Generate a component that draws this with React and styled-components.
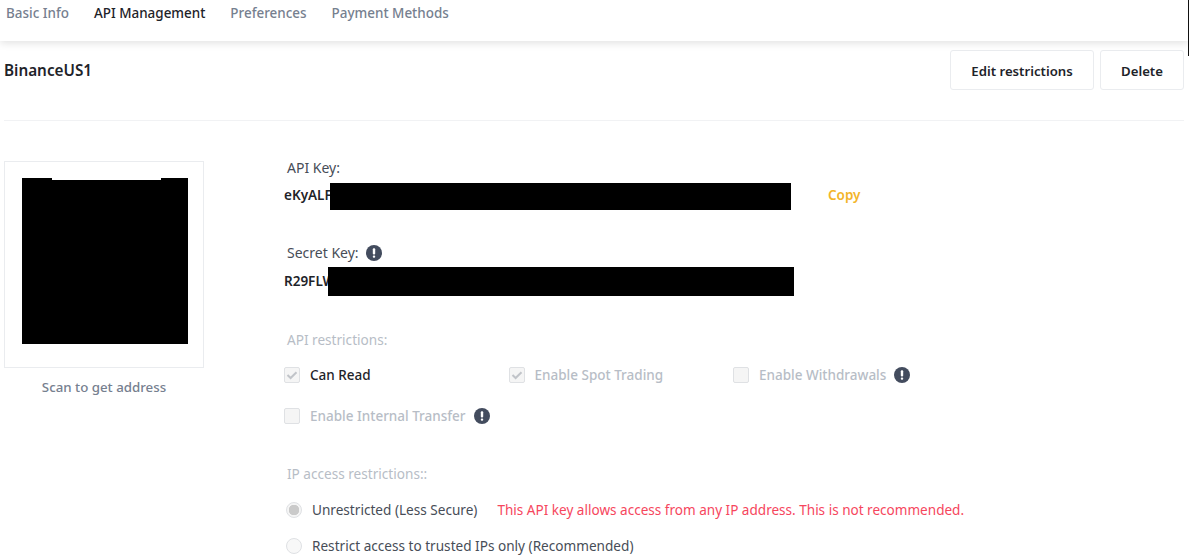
import React from "react";
import styled, { createGlobalStyle } from "styled-components";

const GlobalStyle = createGlobalStyle`
  html, body {
    margin: 0;
    height: 555px;
    overflow: hidden;
    background: #fff;
    font-family: "Noto Sans", "Open Sans", sans-serif;
  }
`;

const tabs = ["Basic Info", "API Management", "Preferences", "Payment Methods"];

const Alert = () => (
  <AlertIcon width="16" height="16" viewBox="0 0 16 16">
    <circle cx="8" cy="8" r="8" fill="#434c5e" />
    <rect x="6.8" y="3.2" width="2.4" height="6.4" rx="1" fill="#fff" />
    <rect x="6.8" y="10.6" width="2.4" height="2.2" rx="1" fill="#fff" />
  </AlertIcon>
);

const Check = ({ checked, label, dark, alert }) => (
  <CheckItem>
    <CheckBox>
      {checked && (
        <svg width="12" height="12" viewBox="0 0 12 12">
          <path d="M1.5 6 4.6 9 10.5 3.2" fill="none" stroke="#c1c4c9" strokeWidth="2" />
        </svg>
      )}
    </CheckBox>
    <CheckLabel $dark={dark}>{label}</CheckLabel>
    {alert && <Alert />}
  </CheckItem>
);

const App = () => {
  return (
    <>
      <GlobalStyle />
      <EdgeLine />
      <Tabs>
        {tabs.map((t, i) => (
          <Tab key={t} $active={i === 1}>{t}</Tab>
        ))}
      </Tabs>
      <Page>
        <TitleRow>
          <Title>BinanceUS1</Title>
          <Buttons>
            <OutlineButton $w={144}>Edit restrictions</OutlineButton>
            <OutlineButton $w={84}>Delete</OutlineButton>
          </Buttons>
        </TitleRow>
        <Content>
          <QrColumn>
            <QrBox>
              <QrNotch />
              <QrBlack />
            </QrBox>
            <ScanText>Scan to get address</ScanText>
          </QrColumn>
          <Details>
            <Label>API Key:</Label>
            <KeyRow>
              <KeyText $w={46} $lift>eKyALF</KeyText>
              <Redaction $w={461} $h={27} />
              <CopyLink>Copy</CopyLink>
            </KeyRow>
            <SecretLabel>
              Secret Key:
              <Alert />
            </SecretLabel>
            <KeyRow $tight>
              <KeyText $w={44}>R29FLW</KeyText>
              <Redaction $w={466} $h={29} />
            </KeyRow>
            <MutedLabel>API restrictions:</MutedLabel>
            <CheckGrid>
              <Check checked dark label="Can Read" />
              <Check checked label="Enable Spot Trading" />
              <Check label="Enable Withdrawals" alert />
              <Check label="Enable Internal Transfer" alert />
            </CheckGrid>
            <IpLabel>IP access restrictions::</IpLabel>
            <RadioRow>
              <Radio $on />
              <RadioLabel>Unrestricted (Less Secure)</RadioLabel>
              <Warning>This API key allows access from any IP address. This is not recommended.</Warning>
            </RadioRow>
            <RadioRow>
              <Radio />
              <RadioLabel>Restrict access to trusted IPs only (Recommended)</RadioLabel>
            </RadioRow>
          </Details>
        </Content>
      </Page>
    </>
  );
};

export default App;

const EdgeLine = styled.div`
  position: absolute;
  top: 0;
  right: 0;
  width: 1px;
  height: 56px;
  background: #111;
  z-index: 2;
`;

const Tabs = styled.div`
  height: 41px;
  display: flex;
  gap: 25px;
  padding: 0 0 0 6px;
  box-shadow: 0 2px 8px rgba(0, 0, 0, 0.12);
  position: relative;
`;

const Tab = styled.div`
  font-size: 13.45px;
  line-height: 26px;
  font-weight: 500;
  color: ${(p) => (p.$active ? "#1e2329" : "#76808f")};
`;

const Page = styled.div`
  padding: 0 5px 0 4px;
`;

const TitleRow = styled.div`
  height: 80px;
  padding-top: 9px;
  box-sizing: border-box;
  display: flex;
  justify-content: space-between;
  border-bottom: 1px solid #f1f2f4;
`;

const Title = styled.div`
  font-size: 15.3px;
  font-weight: 600;
  line-height: 40px;
  color: #1e2329;
`;

const Buttons = styled.div`
  display: flex;
  gap: 6px;
`;

const OutlineButton = styled.button`
  width: ${(p) => p.$w}px;
  height: 40px;
  background: #fff;
  border: 1px solid #eaecef;
  border-radius: 3px;
  font: 600 13.2px "Noto Sans", sans-serif;
  color: #1e2329;
  padding: 1px 0 0;
`;

const Content = styled.div`
  display: flex;
  padding-top: 40px;
`;

const QrColumn = styled.div`
  width: 200px;
  margin-right: 80px;
`;

const QrBox = styled.div`
  width: 200px;
  height: 207px;
  box-sizing: border-box;
  border: 1px solid #eaecef;
  padding: 16px 15px 0 17px;
  position: relative;
`;

const QrBlack = styled.div`
  width: 166px;
  height: 166px;
  background: #000;
`;

const QrNotch = styled.div`
  position: absolute;
  top: 16px;
  left: 47px;
  width: 109px;
  height: 2px;
  background: #fff;
`;

const ScanText = styled.div`
  margin-top: 9px;
  text-align: center;
  font-size: 13.3px;
  line-height: 20px;
  font-weight: 500;
  color: #76808f;
`;

const Details = styled.div`
  flex: 1;
  display: flex;
  flex-direction: column;
`;

const Label = styled.div`
  font-size: 14px;
  line-height: 16px;
  color: #474d57;
  padding-left: 3px;
  margin-top: -1px;
`;

const SecretLabel = styled(Label)`
  display: flex;
  align-items: center;
  gap: 7px;
  margin-top: 35px;
`;

const KeyRow = styled.div`
  display: flex;
  align-items: center;
  margin-top: ${(p) => (p.$tight ? "6px" : "7px")};
`;

const KeyText = styled.div`
  width: ${(p) => p.$w}px;
  white-space: nowrap;
  font-size: 13.5px;
  font-weight: 600;
  color: #1e2329;
  padding-bottom: ${(p) => (p.$lift ? "3px" : "1px")};
`;

const Redaction = styled.div`
  position: relative;
  width: ${(p) => p.$w}px;
  height: ${(p) => p.$h}px;
  background: #000;
`;

const CopyLink = styled.div`
  margin-left: 37px;
  padding-bottom: 3px;
  font-size: 13.5px;
  font-weight: 600;
  color: #f3b52a;
`;

const MutedLabel = styled.div`
  margin-top: 35px;
  padding-left: 3px;
  font-size: 13.6px;
  line-height: 18px;
  color: #b7bdc6;
`;

const IpLabel = styled(MutedLabel)`
  margin-top: 39px;
  margin-bottom: 1px;
`;

const CheckGrid = styled.div`
  display: grid;
  grid-template-columns: repeat(3, 224.5px);
  row-gap: 21px;
  margin-top: 16px;
`;

const CheckItem = styled.div`
  display: flex;
  align-items: center;
  height: 20px;
`;

const CheckBox = styled.div`
  width: 16px;
  height: 16px;
  box-sizing: border-box;
  border: 1px solid #dfe1e4;
  border-radius: 2px;
  background: #f5f5f5;
  display: flex;
  align-items: center;
  justify-content: center;
  margin-right: 10px;
`;

const CheckLabel = styled.div`
  font-size: 13.5px;
  font-weight: 500;
  color: ${(p) => (p.$dark ? "#1e2329" : "#b7bdc6")};
  margin-right: 8px;
`;

const AlertIcon = styled.svg`
  flex: none;
`;

const RadioRow = styled.div`
  display: flex;
  align-items: center;
  height: 20px;
  margin-top: 16px;
`;

const Radio = styled.div`
  width: 16px;
  height: 16px;
  box-sizing: border-box;
  border-radius: 50%;
  border: 1px solid #dfe1e4;
  background: ${(p) => (p.$on ? "radial-gradient(circle, #cacaca 0 5px, #f5f5f5 5.5px)" : "#f8f8f8")};
  margin-left: 2px;
  margin-right: 10px;
`;

const RadioLabel = styled.div`
  font-size: 13.6px;
  line-height: 18px;
  margin-top: -1px;
  color: #474d57;
`;

const Warning = styled.div`
  margin-left: 20px;
  font-size: 13.55px;
  line-height: 18px;
  margin-top: -1px;
  color: #f6465d;
`;
